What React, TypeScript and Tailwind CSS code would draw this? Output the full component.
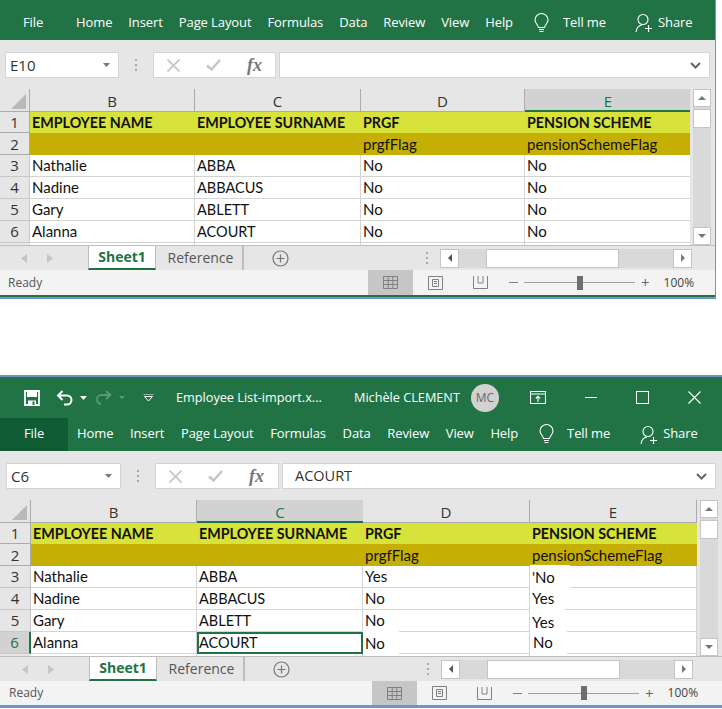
import React from "react";

const UI = "font-['Open_Sans',sans-serif]";
const XL = "font-['Lato',sans-serif]";

type Cell = { t: string; c?: string; p?: string };
type Cfg = {
  width: string;
  cols: string;
  rowH: string;
  hdrH: string;
  sel: "C" | "E";
  rows: [string, string, Cell, Cell][];
  name: string;
  formula: string;
  nameW: string;
  fxW: string;
  pad: string;
  dark: boolean;
};

function Bulb() {
  return (
    <svg width="17" height="21" viewBox="0 0 17 21" fill="none" stroke="#fff" strokeWidth="1.1">
      <path d="M5.5 14.5C5 11.5 2 10.5 2 7a6.5 6.5 0 0 1 13 0c0 3.500-3 4.500-3.500 7.500z" />
      <path d="M6 16.500h5M6.500 18.500h4" />
    </svg>
  );
}

function Person() {
  return (
    <svg width="18" height="20" viewBox="0 0 18 20" fill="none" stroke="#fff" strokeWidth="1.1">
      <circle cx="8" cy="6.500" r="5" />
      <path d="M1 19c.5-4 3-6.500 6-7M13.500 12v7M10 15.500h7" />
    </svg>
  );
}

function Ribbon({ dark }: { dark: boolean }) {
  const tabs = ["Home", "Insert", "Page Layout", "Formulas", "Data", "Review", "View", "Help"];
  return (
    <div className={`flex items-center text-white text-[13px] tracking-[-0.1px] ${UI} ${dark ? "h-[33px] bg-[#217346]" : "h-[40px] pt-[6px] bg-[#217346]"}`}>
      <div className={`flex h-full items-center justify-center ${dark ? "w-[68px] bg-[#0f5c34] pb-[1px]" : "w-[66px]"}`}>File</div>
      <div className={`flex ${dark ? "ml-[9px] gap-[16.600px] pb-[1px]" : "ml-[10px] gap-[16px]"}`}>
        {tabs.map((t) => (
          <span key={t}>{t}</span>
        ))}
      </div>
      <div className="ml-[20px]"><Bulb /></div>
      <span className={`${dark ? "ml-[12px] pb-[1px]" : "ml-[13px]"}`}>Tell me</span>
      <div className={dark ? "ml-[30px]" : "ml-[29px]"}><Person /></div>
      <span className={`ml-[5px] ${dark ? "pb-[1px]" : ""}`}>Share</span>
    </div>
  );
}

function TitleBar() {
  return (
    <div className={`flex h-[41px] items-center bg-[#217346] text-white text-[12.700px] ${UI}`}>
      <svg className="ml-[24px]" width="16" height="16" viewBox="0 0 16 16">
        <path d="M1 1h14v14H1z" fill="none" stroke="#fff" strokeWidth="1.800" />
        <path d="M3 1h10v6H3zM4 10.500h8V15H4z" fill="#fff" />
        <path d="M8.500 11.500h2V15h-2z" fill="#217346" />
      </svg>
      <svg className="ml-[16px]" width="18" height="16" viewBox="0 0 18 16" fill="none" stroke="#fff" strokeWidth="2">
        <path d="M6.500 1 2 5.500 6.500 10M2 5.500h9a4.500 4.500 0 0 1 0 9H8" />
      </svg>
      <svg className="ml-[6px]" width="7" height="4" viewBox="0 0 7 4"><path d="M0 0h7L3.500 4z" fill="#fff" /></svg>
      <svg className="ml-[8px]" width="17" height="15" viewBox="0 0 17 15" fill="none" stroke="#5d9a78" strokeWidth="1.800">
        <path d="M11 1l4.500 4L11 9M15.500 5H7a4.500 4.500 0 0 0-1 9" />
      </svg>
      <svg className="ml-[7px]" width="6" height="3" viewBox="0 0 6 3"><path d="M0 0h6L3 3z" fill="#5d9a78" /></svg>
      <svg className="ml-[18px]" width="11" height="8" viewBox="0 0 11 8" fill="none" stroke="#fff" strokeWidth="1">
        <path d="M.5 0h10M1.500 2.500h8L5.500 7z" />
      </svg>
      <span className="ml-[22px] w-[178px]">Employee List-import.x...</span>
      <span className="w-[117px]">Michèle CLEMENT</span>
      <div className="flex h-[28px] w-[28px] items-center justify-center rounded-full bg-[#d2d2d2] text-[12px] text-[#666]">MC</div>
      <svg className="ml-[31px]" width="16" height="13" viewBox="0 0 16 13" fill="none" stroke="#fff" strokeWidth="1.100">
        <path d="M.5 .5h15v12H.5zM.5 3h15" />
        <path d="M8 11V5.500M5.800 7.500 8 5.200l2.200 2.300" />
      </svg>
      <div className="ml-[39px] h-[1.500px] w-[12px] bg-white" />
      <div className="ml-[39px] h-[13px] w-[13px] border border-white" />
      <svg className="ml-[39px]" width="13" height="13" viewBox="0 0 13 13" stroke="#fff" strokeWidth="1.200">
        <path d="M.5 .5l12 12M12.500 .5l-12 12" />
      </svg>
    </div>
  );
}

function FormulaBar({ cfg }: { cfg: Cfg }) {
  return (
    <div className={`flex h-[49px] items-start gap-0 bg-[#e6e6e6] pt-[12px] ${cfg.pad}`}>
      <div className={`flex h-[26px] ${cfg.nameW} items-center justify-between border border-[#d4d4d4] bg-white pl-[4px] pr-[8px] text-[15px] text-[#333] ${UI}`}>
        <span>{cfg.name}</span>
        <svg width="7" height="4" viewBox="0 0 7 4"><path d="M0 0h7L3.500 4z" fill="#777" /></svg>
      </div>
      <div className="flex h-[26px] w-[34px] flex-col items-center justify-center gap-[3px]">
        <div className="h-[2px] w-[2px] bg-[#aaa]" />
        <div className="h-[2px] w-[2px] bg-[#aaa]" />
        <div className="h-[2px] w-[2px] bg-[#aaa]" />
      </div>
      <div className={`flex h-[26px] ${cfg.fxW} items-center border border-[#d4d4d4] bg-white`}>
        <svg className="ml-[13px]" width="13" height="13" viewBox="0 0 13 13" stroke="#c4c4c4" strokeWidth="1.600">
          <path d="M.5 .5l12 12M12.500 .5l-12 12" />
        </svg>
        <svg className="ml-[26px]" width="15" height="12" viewBox="0 0 15 12" fill="none" stroke="#c4c4c4" strokeWidth="2.400">
          <path d="M1 6.500 5.500 10.500 14 1" />
        </svg>
        <span className="ml-[26px] font-['Liberation_Serif',serif] text-[18px] italic font-semibold text-[#777]">fx</span>
      </div>
      <div className={`ml-[3px] flex h-[26px] flex-1 items-center justify-between border border-[#d4d4d4] bg-white pl-[12px] pr-[8px] text-[14.500px] text-[#333] ${UI}`}>
        <span>{cfg.formula}</span>
        <svg width="11" height="7" viewBox="0 0 11 7" fill="none" stroke="#666" strokeWidth="2"><path d="M1 1l4.500 4.500L10 1" /></svg>
      </div>
    </div>
  );
}

function Val({ cell }: { cell: Cell }) {
  return (
    <div className="relative flex h-full items-center border-r border-b border-[#d4d4d4] bg-white pl-[2px]">
      {cell.p ? <div className={`absolute left-0 bg-white ${cell.p}`} /> : null}
      <span className={`relative ${cell.c ?? ""}`}>{cell.t}</span>
    </div>
  );
}

function Sheet({ cfg }: { cfg: Cfg }) {
  const colNames = ["B", "C", "D", "E"];
  return (
    <div className="flex h-[156px] bg-[#e6e6e6]">
      <div className="flex-1 overflow-hidden">
        <div className={`grid ${cfg.cols} text-[#111] text-[15px] ${XL}`}>
          <div className={`${cfg.hdrH} relative border-b border-r border-[#ababab] bg-[#e6e6e6]`}>
            <div className="absolute bottom-[2px] right-[3px] h-0 w-0 border-b-[15px] border-l-[15px] border-b-[#b9b9b9] border-l-transparent" />
          </div>
          {colNames.map((c) => (
            <div
              key={c}
              className={`${cfg.hdrH} flex items-center justify-center pt-[3px] text-[15px] ${UI} ${
                cfg.sel === c
                  ? "border-b-2 border-b-[#217346] bg-[#d2d2d2] text-[#217346]"
                  : "border-b border-r border-[#ababab] bg-[#e6e6e6] text-[#333]"
              }`}
            >
              {c}
            </div>
          ))}
          {[
            ["EMPLOYEE NAME", "EMPLOYEE SURNAME", "PRGF", "PENSION SCHEME"],
            ["", "", "prgfFlag", "pensionSchemeFlag"],
          ].map((r, i) => (
            <React.Fragment key={i}>
              <div className={`${cfg.rowH} flex items-center justify-center border-r border-b border-[#ababab] bg-[#e6e6e6] text-[15px] text-[#333] ${UI}`}>{i + 1}</div>
              {r.map((t, j) => (
                <div key={j} className={`${cfg.rowH} flex items-center pl-[2px] ${i === 0 ? "bg-[#d7e33a] font-bold text-[14.300px]" : "bg-[#c5af05] pb-[1px]"}`}>{t}</div>
              ))}
            </React.Fragment>
          ))}
          {cfg.rows.map((r, i) => {
            const selRow = cfg.sel === "C" && i === 3;
            return (
              <React.Fragment key={i}>
                <div className={`${cfg.rowH} flex items-center justify-center border-r border-b border-[#c8c8c8] text-[15px] ${UI} ${selRow ? "bg-[#d2d2d2] text-[#217346] border-r-2 border-r-[#217346]" : "bg-[#e6e6e6] text-[#333]"}`}>{i + 3}</div>
                <div className={`${cfg.rowH} flex items-center border-r border-b border-[#d4d4d4] bg-white pl-[2px]`}>{r[0]}</div>
                <div className={`${cfg.rowH} flex items-center bg-white text-[14.500px] ${selRow ? "border-2 border-[#217346]" : "border-r border-b border-[#d4d4d4] pl-[2px]"}`}>{r[1]}</div>
                <div className={cfg.rowH}><Val cell={r[2]} /></div>
                <div className={cfg.rowH}><Val cell={r[3]} /></div>
              </React.Fragment>
            );
          })}
          <div className="h-[3px] bg-[#e6e6e6]" />
          <div className="h-[3px] border-r border-[#d4d4d4] bg-white" />
          <div className="h-[3px] border-r border-[#d4d4d4] bg-white" />
          <div className="h-[3px] border-r border-[#d4d4d4] bg-white" />
          <div className="h-[3px] border-r border-[#d4d4d4] bg-white" />
        </div>
      </div>
      <div className="ml-[3px] mr-[4px] flex w-[18px] flex-col bg-[#d9d9d9]">
        <div className="flex h-[18px] items-center justify-center border border-[#c4c4c4] bg-white">
          <svg width="8" height="4" viewBox="0 0 8 4"><path d="M0 4h8L4 0z" fill="#777" /></svg>
        </div>
        <div className="mt-[2px] h-[19px] border border-[#c4c4c4] bg-white" />
        <div className="flex-1" />
        <div className="flex h-[18px] items-center justify-center border border-[#c4c4c4] bg-white">
          <svg width="8" height="4" viewBox="0 0 8 4"><path d="M0 0h8L4 4z" fill="#777" /></svg>
        </div>
      </div>
    </div>
  );
}

function TabsBar({ cfg }: { cfg: Cfg }) {
  const w2 = cfg.sel === "C";
  return (
    <div className={`flex h-[25px] items-center border-t border-[#bdbdbd] bg-[#e6e6e6] ${UI}`}>
      <svg className={w2 ? "ml-[22px]" : "ml-[21px]"} width="6" height="9" viewBox="0 0 6 9"><path d="M6 0v9L0 4.500z" fill="#c4c4c4" /></svg>
      <svg className="ml-[20px]" width="6" height="9" viewBox="0 0 6 9"><path d="M0 0v9l6-4.500z" fill="#c4c4c4" /></svg>
      <div className="ml-[35px] flex h-[24px] w-[68px] items-center justify-center border-x border-b-2 border-x-[#bdbdbd] border-b-[#217346] bg-white pb-[2px] text-[14px] font-bold text-[#217346]">Sheet1</div>
      <div className="flex h-[24px] w-[88px] items-center justify-center border-r-2 border-[#bdbdbd] pb-[2px] pl-[3px] text-[14px] text-[#555]">Reference</div>
      <svg className="ml-[28px]" width="17" height="17" viewBox="0 0 17 17" fill="none" stroke="#777" strokeWidth="1.200">
        <circle cx="8.500" cy="8.500" r="7.500" />
        <path d="M8.500 4.500v8M4.500 8.500h8" />
      </svg>
      <div className="ml-[137px] flex flex-col gap-[3px]">
        <div className="h-[2px] w-[2px] bg-[#aaa]" />
        <div className="h-[2px] w-[2px] bg-[#aaa]" />
        <div className="h-[2px] w-[2px] bg-[#aaa]" />
      </div>
      <div className="ml-[12px] flex h-[19px] w-[252px] items-stretch bg-[#d9d9d9]">
        <div className="flex w-[19px] items-center justify-center border border-[#c4c4c4] bg-white">
          <svg width="4" height="8" viewBox="0 0 4 8"><path d="M4 0v8L0 4z" fill="#555" /></svg>
        </div>
        <div className="ml-[27px] w-[133px] border border-[#c4c4c4] bg-white" />
        <div className="flex-1" />
        <div className="flex w-[19px] items-center justify-center border border-[#c4c4c4] bg-white">
          <svg width="4" height="8" viewBox="0 0 4 8"><path d="M0 0v8l4-4z" fill="#777" /></svg>
        </div>
      </div>
    </div>
  );
}

function StatusBar({ cfg }: { cfg: Cfg }) {
  const w2 = cfg.sel === "C";
  return (
    <div className={`flex items-center bg-[#f3f3f3] text-[12px] text-[#555] ${UI} ${w2 ? "h-[24px]" : "h-[25px]"}`}>
      <span className={w2 ? "ml-[9px] w-[363px]" : "ml-[8px] w-[360px]"}>Ready</span>
      <div className="flex h-full w-[45px] items-center justify-center bg-[#c6c6c6]">
        <svg width="15" height="13" viewBox="0 0 15 13" fill="none" stroke="#808080" strokeWidth="1">
          <path d="M.5 .5h14v12H.5zM.5 4.500h14M.5 8.500h14M5.200 .5v12M9.800 .5v12" />
        </svg>
      </div>
      <svg className="ml-[15px]" width="15" height="14" viewBox="0 0 15 14" fill="none" stroke="#808080">
        <path d="M.5 .5h14v13H.5zM4.500 3.500h6v7h-6zM6 5.500h3M6 7.500h3" />
      </svg>
      <svg className="ml-[30px]" width="15" height="13" viewBox="0 0 15 13" fill="none" stroke="#808080">
        <path d="M.5 0v12.500h14V0M5 0v7h5V0" />
      </svg>
      <div className="ml-[21px] h-[1px] w-[9px] bg-[#808080]" />
      <div className="ml-[6px] flex w-[111px] items-center">
        <div className="h-[1px] w-[53px] bg-[#a0a0a0]" />
        <div className="h-[14px] w-[6px] bg-[#6e6e6e]" />
        <div className="h-[1px] flex-1 bg-[#a0a0a0]" />
      </div>
      <span className="ml-[6px] text-[15px] leading-none text-[#666]">+</span>
      <span className="ml-[14px] text-[#444]">100%</span>
    </div>
  );
}

const Y = (t: string, c?: string, p?: string): Cell => ({ t, c, p });

const cfg1: Cfg = {
  width: "w-[716px]",
  cols: "grid-cols-[30px_165px_166px_164px_166px]",
  rowH: "h-[21.900px]",
  hdrH: "h-[22.500px]",
  sel: "E",
  rows: [
    ["Nathalie", "ABBA", Y("No"), Y("No")],
    ["Nadine", "ABBACUS", Y("No"), Y("No")],
    ["Gary", "ABLETT", Y("No"), Y("No")],
    ["Alanna", "ACOURT", Y("No"), Y("No")],
  ],
  name: "E10",
  formula: "",
  nameW: "w-[114px]",
  fxW: "w-[123px]",
  pad: "pl-[5px] pr-[5px]",
  dark: false,
};

const cfg2: Cfg = {
  width: "w-[722px]",
  cols: "grid-cols-[31px_166px_166px_167px_167px]",
  rowH: "h-[21.900px]",
  hdrH: "h-[22.500px]",
  sel: "C",
  rows: [
    ["Nathalie", "ABBA", Y("Yes"), Y("'No", "pt-[2px]", "top-[-1px] h-[24px] w-[40px]")],
    ["Nadine", "ABBACUS", Y("No"), Y("Yes", "", "top-[-1px] h-[24px] w-[35px]")],
    ["Gary", "ABLETT", Y("No"), Y("Yes", "pt-[3px]", "top-[-1px] h-[24px] w-[35px]")],
    [
      "Alanna",
      "ACOURT",
      Y("No", "pt-[1px]", "top-[-1px] h-[26px] w-[36px]"),
      Y("No", "pl-[1px]", "top-[-1px] h-[26px] w-[37px]"),
    ],
  ],
  name: "C6",
  formula: "ACOURT",
  nameW: "w-[115px]",
  fxW: "w-[124px]",
  pad: "pl-[6px] pr-[6px]",
  dark: true,
};

export default function App() {
  return (
    <div className="min-h-[709px] w-[722px] bg-white">
      <div className={`${cfg1.width} border-r border-[#6d97c4]`}>
        <Ribbon dark={false} />
        <FormulaBar cfg={cfg1} />
        <Sheet cfg={cfg1} />
        <TabsBar cfg={cfg1} />
        <StatusBar cfg={cfg1} />
        <div className="h-[2px] bg-[#217346]" />
        <div className="h-[2px] bg-[#6d97c4]" />
      </div>
      <div className={`mt-[76px] ${cfg2.width} border-t-2 border-[#6d97c4]`}>
        <TitleBar />
        <Ribbon dark />
        <FormulaBar cfg={cfg2} />
        <Sheet cfg={cfg2} />
        <TabsBar cfg={cfg2} />
        <StatusBar cfg={cfg2} />
        <div className="h-[3px] bg-[#6d97c4]" />
      </div>
    </div>
  );
}
